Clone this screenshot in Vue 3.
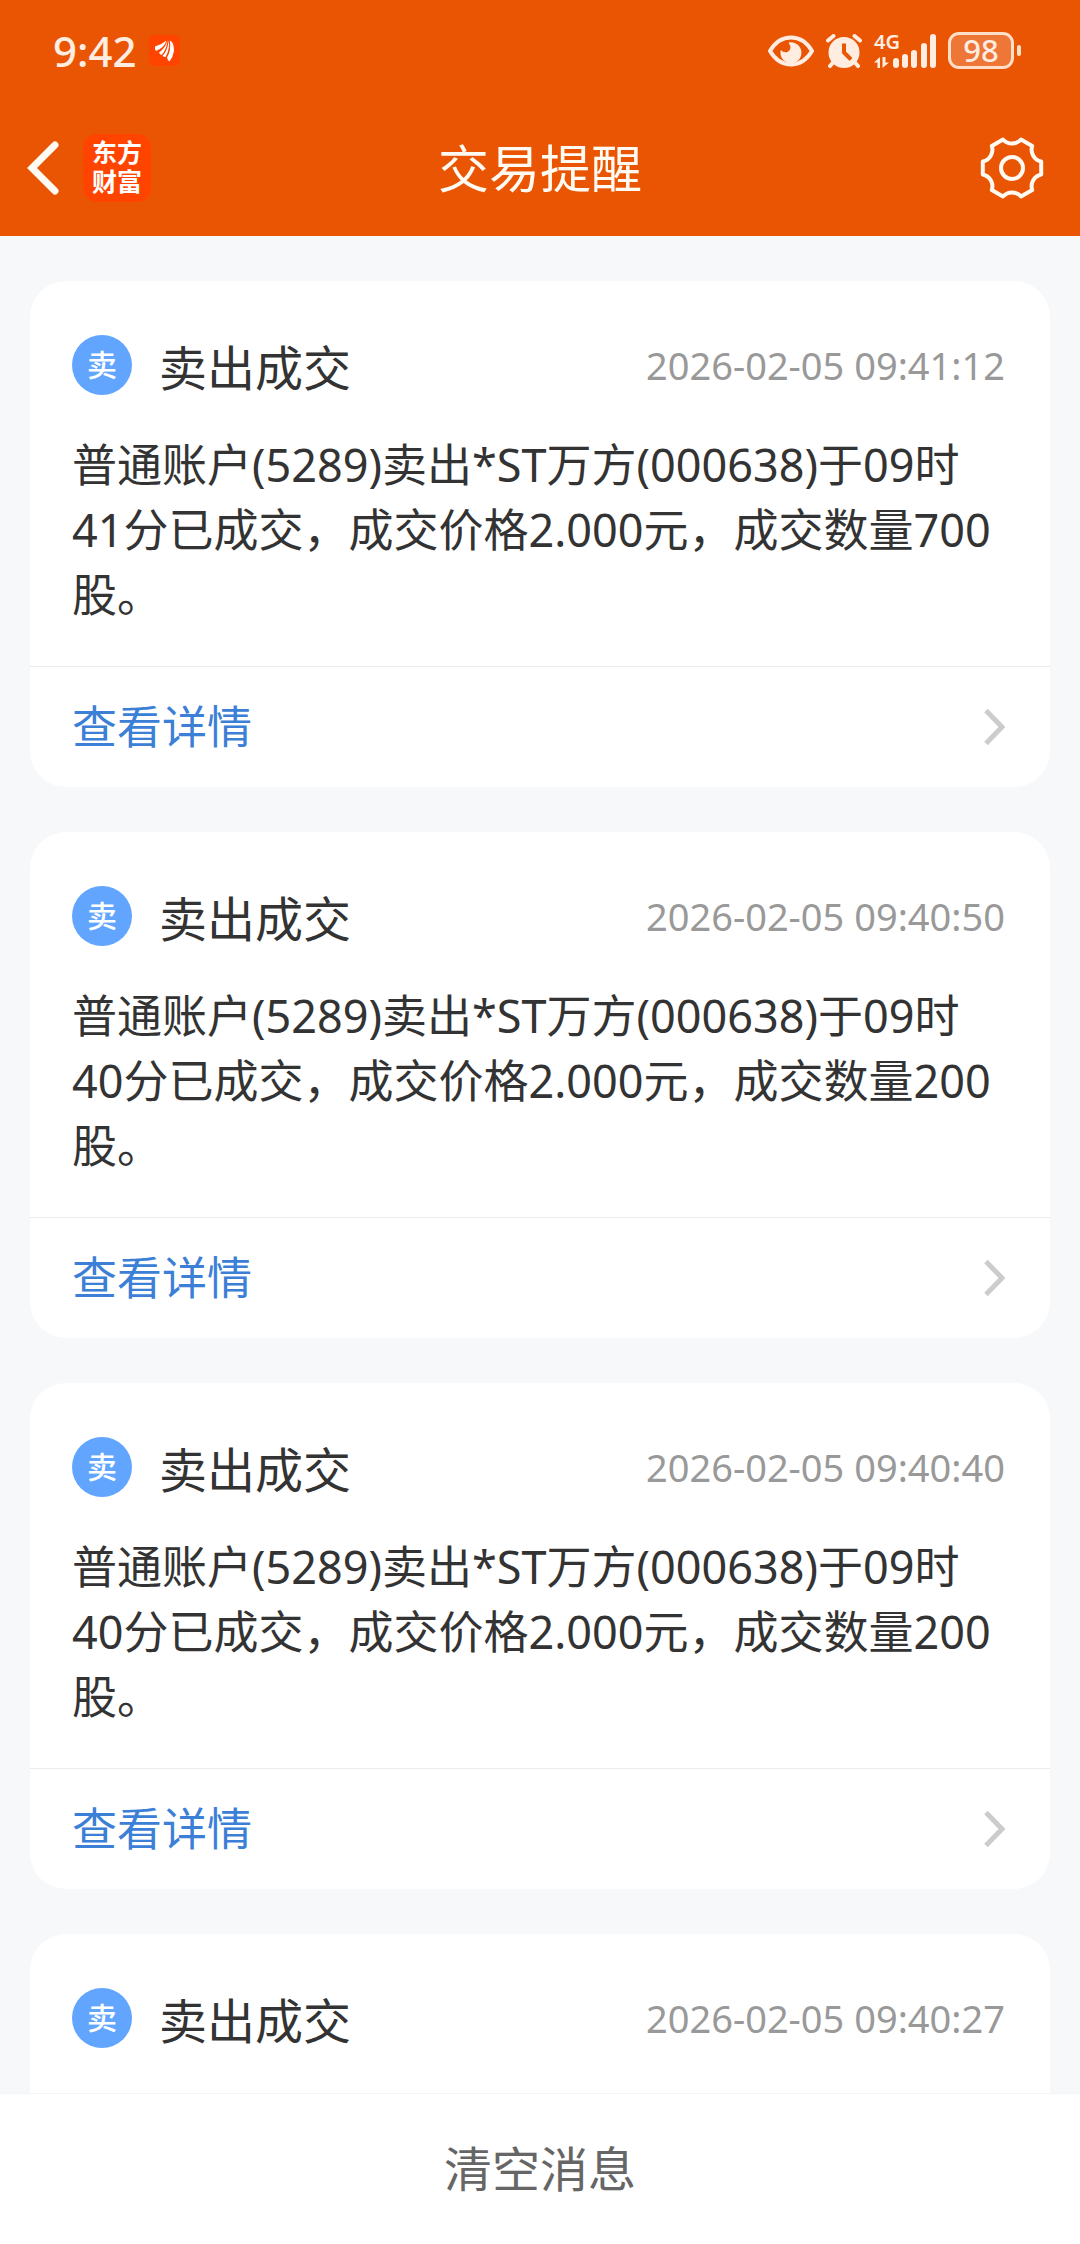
<script setup>
const messages = [
  {
    title: '卖出成交',
    time: '2026-02-05 09:41:12',
    text: '普通账户(5289)卖出*ST万方(000638)于09时41分已成交，成交价格2.000元，成交数量700股。',
  },
  {
    title: '卖出成交',
    time: '2026-02-05 09:40:50',
    text: '普通账户(5289)卖出*ST万方(000638)于09时40分已成交，成交价格2.000元，成交数量200股。',
  },
  {
    title: '卖出成交',
    time: '2026-02-05 09:40:40',
    text: '普通账户(5289)卖出*ST万方(000638)于09时40分已成交，成交价格2.000元，成交数量200股。',
  },
  { title: '卖出成交', time: '2026-02-05 09:40:27', text: '' },
]
</script>

<template>
  <div class="page" lang="zh-CN">
    <header class="header">
      <div class="status">
        <div class="status-left">
          <span class="clock">9:42</span>
          <svg class="app-badge" width="31" height="31" viewBox="0 0 31 31" aria-hidden="true">
            <rect width="31" height="31" rx="5" fill="#ff4400" />
            <g fill="#fff">
              <path d="M6 11.500 Q13 9.500 17.500 5.500 Q15.500 12.500 7 16 Q5.500 14 6 11.500Z" />
              <path d="M18.500 5.200 Q18 14 12.500 20 Q10.500 19 10 17.500 Q16.500 13 18.500 5.200Z" />
              <path d="M19.600 5.500 Q21.500 13 16.500 22 Q15 21.800 13.500 21 Q19 15 19.600 5.500Z" />
              <path d="M20.800 5.500 Q25 7 25 16 Q24 22 20.500 26.500 Q18.500 25 18 22.500 Q22.500 15 20.800 5.500Z" />
            </g>
          </svg>
        </div>
        <div class="status-right">
          <svg width="46" height="32" viewBox="0 0 46 32" aria-hidden="true">
            <path d="M2 16 Q10 2.500 23 2.500 Q36 2.500 44 16 Q36 29.500 23 29.500 Q10 29.500 2 16Z" fill="none" stroke="#ffede2" stroke-width="4" stroke-linejoin="round" />
            <path d="M20.500 7.500 A10.500 10.500 0 1 1 12.800 15 Q15.500 18 19.500 17 Q25 14.500 20.500 7.500Z" fill="#ffede2" />
          </svg>
          <svg class="alarm" width="36" height="34" viewBox="0 0 36 34" aria-hidden="true">
            <circle cx="18" cy="18.500" r="15.500" fill="#ffede2" />
            <path d="M2 6.500 L7.500 2 M34 6.500 L28.500 2 M7.500 28 L4 32 M28.500 28 L32 32" stroke="#ffede2" stroke-width="4" stroke-linecap="round" />
            <path d="M18 9.500 V18.500 L25 25.500" fill="none" stroke="#ea5504" stroke-width="4" />
          </svg>
          <div class="signal">
            <div class="network">
              <span class="network-name">4G</span>
              <svg width="16" height="11" viewBox="0 0 16 11" aria-hidden="true">
                <path d="M6 11 V0 L0 5.500 H3.500 V11Z M8.500 0 V11 L15 5.500 H11.500 V0Z" fill="#ffede2" />
              </svg>
            </div>
            <svg class="bars" width="43" height="34" viewBox="0 0 43 34" aria-hidden="true">
              <g fill="#ffede2">
                <rect x="0" y="24" width="6" height="10" rx="3" />
                <rect x="9" y="20" width="6" height="14" rx="3" />
                <rect x="18" y="16" width="6" height="18" rx="3" />
                <rect x="28" y="9" width="6" height="25" rx="3" />
                <rect x="37" y="0" width="6" height="34" rx="3" />
              </g>
            </svg>
          </div>
          <div class="battery">
            <span class="battery-level">98</span>
            <span class="battery-tip"></span>
          </div>
        </div>
      </div>
      <nav class="nav">
        <div class="nav-side">
          <button class="icon-button back" type="button" aria-label="返回">
            <svg width="32" height="54" viewBox="0 0 32 54" aria-hidden="true">
              <path d="M28 4 L5 27 L28 50" fill="none" stroke="#fffaf2" stroke-width="7" stroke-linecap="round" stroke-linejoin="miter" />
            </svg>
          </button>
          <span class="brand">东方<br />财富</span>
        </div>
        <h1 class="nav-title">交易提醒</h1>
        <div class="nav-side nav-end">
          <button class="icon-button" type="button" aria-label="设置">
            <svg width="64" height="64" viewBox="0 0 64 64" aria-hidden="true">
              <path d="M23 3.500 A12 12 0 0 0 41 3.500 L52.200 10 A12 12 0 0 0 61.200 25.500 V38.500 A12 12 0 0 0 52.200 54 L41 60.500 A12 12 0 0 0 23 60.500 L11.800 54 A12 12 0 0 0 2.800 38.500 V25.500 A12 12 0 0 0 11.800 10Z" fill="none" stroke="#fffaf2" stroke-width="4" stroke-linejoin="round" />
              <circle cx="32" cy="32" r="11" fill="none" stroke="#fffaf2" stroke-width="4" />
            </svg>
          </button>
        </div>
      </nav>
    </header>

    <main class="list">
      <article v-for="item in messages" :key="item.time" class="card">
        <div class="card-head">
          <span class="tag">卖</span>
          <h2 class="card-title">{{ item.title }}</h2>
          <time class="card-time">{{ item.time }}</time>
        </div>
        <template v-if="item.text">
          <p class="card-text">{{ item.text }}</p>
          <a class="detail" href="#">
            <span>查看详情</span>
            <svg width="21" height="36" viewBox="0 0 21 36" aria-hidden="true">
              <path d="M2 1.500 L18 18 L2 34.500" fill="none" stroke="#ccc" stroke-width="5" />
            </svg>
          </a>
        </template>
      </article>
    </main>

    <footer class="footer">
      <button class="clear" type="button">清空消息</button>
    </footer>
  </div>
</template>

<style>
body {
  margin: 0;
}
</style>

<style scoped>
.page {
  display: flex;
  flex-direction: column;
  height: 100vh;
  overflow: hidden;
  background: #f7f8fa;
  color: #333;
  font-family: "Noto Sans", "Noto Sans CJK SC", sans-serif;
}

.header {
  flex: none;
  background: #ea5504;
}

.status {
  display: flex;
  align-items: center;
  justify-content: space-between;
  height: 101px;
  padding: 0 59px 0 53px;
  color: #ffede2;
}

.status-left,
.status-right {
  display: flex;
  align-items: center;
}

.status-left {
  gap: 12px;
}

.clock {
  font-size: 42px;
  font-weight: 500;
  line-height: 48px;
}

.status-right {
  gap: 12px;
}

.signal {
  display: flex;
  align-items: flex-end;
  height: 34px;
}

.network {
  display: flex;
  flex-direction: column;
  justify-content: space-between;
  width: 19px;
  height: 34px;
}

.network-name {
  font-size: 20px;
  font-weight: 600;
  line-height: 16px;
}

.battery {
  display: flex;
  align-items: center;
  gap: 3px;
}

.battery-level {
  box-sizing: border-box;
  width: 66px;
  height: 37px;
  border: 3px solid #ffdfc8;
  border-radius: 11px;
  background: #ee7637;
  font-size: 31px;
  font-weight: 500;
  line-height: 31px;
  text-align: center;
}

.battery-tip {
  width: 4px;
  height: 11px;
  border-radius: 2px;
  background: #ffdfc8;
}

.nav {
  display: grid;
  grid-template-columns: 1fr auto 1fr;
  align-items: center;
  height: 133px;
  padding: 0 27px 2px;
}

.nav-side {
  display: flex;
  align-items: center;
  gap: 24px;
}

.nav-end {
  justify-content: flex-end;
  padding-right: 9px;
}

.icon-button {
  display: flex;
  padding: 0;
  border: 0;
  background: none;
  cursor: pointer;
}

.brand {
  box-sizing: border-box;
  width: 68px;
  height: 68px;
  padding: 5px 0;
  border-radius: 14px;
  background: #ff4400;
  color: #fff;
  font-family: "Liberation Sans", "Noto Sans CJK SC", sans-serif;
  font-size: 25px;
  font-weight: 700;
  line-height: 29px;
  text-align: center;
}

.nav-title {
  margin: 0;
  color: #fffaf2;
  font-size: 51px;
  font-weight: 400;
  line-height: 72px;
}

.list {
  display: flex;
  flex: 1;
  flex-direction: column;
  gap: 45px;
  min-height: 0;
  padding: 45px 30px 0;
  overflow: hidden;
}

.card {
  flex: none;
  min-height: 506px;
  border-radius: 36px;
  background: #fff;
}

.card-head {
  display: flex;
  align-items: center;
  padding: 54px 45px 37px 42px;
}

.tag {
  width: 60px;
  height: 60px;
  border-radius: 50%;
  background: #61a5ff;
  color: #fff;
  font-size: 30px;
  font-weight: 500;
  line-height: 60px;
  text-align: center;
}

.card-title {
  margin: 0 0 0 27px;
  font-family: "Noto Sans CJK SC", sans-serif;
  font-size: 48px;
  font-weight: 400;
  line-height: 60px;
}

.card-time {
  margin-left: auto;
  color: #999;
  font-size: 38px;
  line-height: 60px;
}

.card-text {
  margin: 0;
  padding: 0 42px 39px;
  font-size: 45px;
  line-height: 65px;
}

.detail {
  display: flex;
  align-items: center;
  justify-content: space-between;
  height: 120px;
  padding: 0 45px 0 42px;
  border-top: 1px solid #ebebeb;
  color: #3c7fd6;
  font-size: 45px;
  line-height: 60px;
  text-decoration: none;
}

.footer {
  flex: none;
  border-top: 1px solid #f5f5f5;
  background: #fff;
}

.clear {
  display: block;
  width: 100%;
  height: 150px;
  padding: 0;
  border: 0;
  background: none;
  color: #666;
  font-family: inherit;
  font-size: 48px;
  line-height: 60px;
  cursor: pointer;
}
</style>
